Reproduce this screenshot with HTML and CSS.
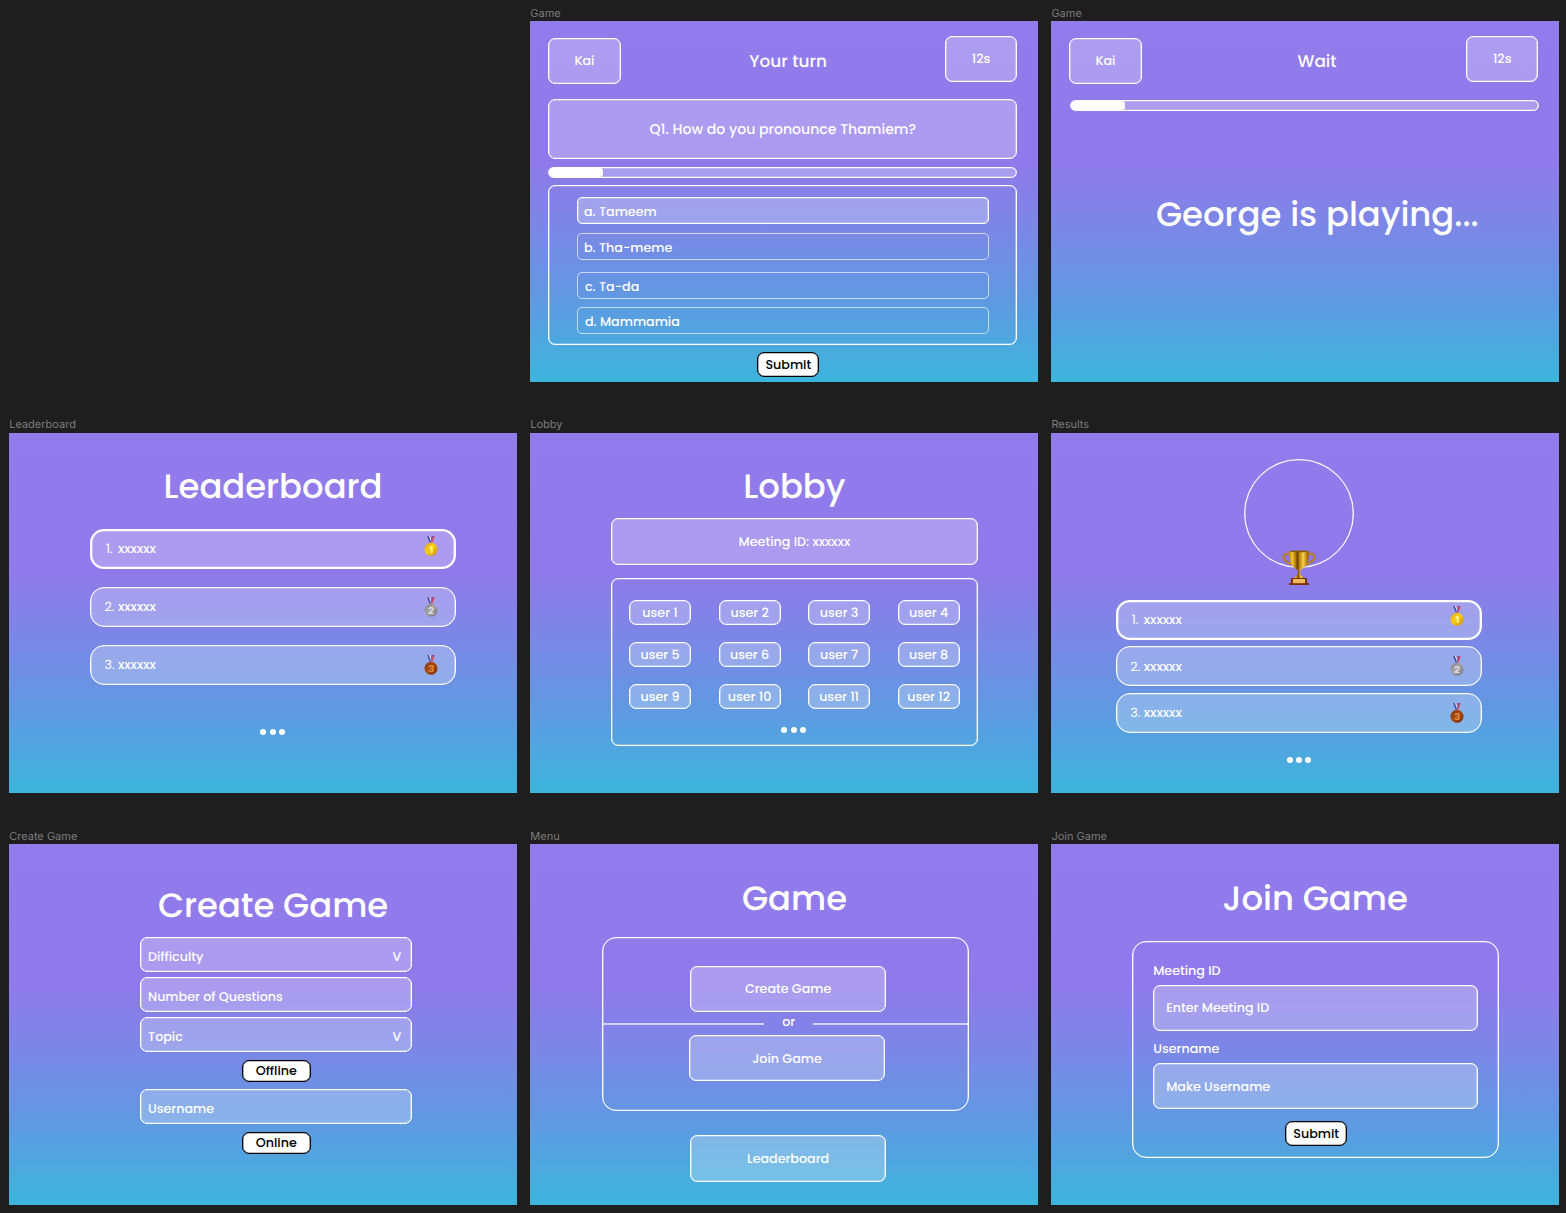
FILE: index.html
```html
<!DOCTYPE html>
<html lang="en">
<head>
<meta charset="utf-8">
<title>Quiz game screens</title>
<link rel="stylesheet" href="styles.css">
</head>
<body>
<svg class="defs" width="0" height="0" aria-hidden="true">
  <defs>
    <linearGradient id="gold" x1="0" y1="0" x2="1" y2="1"><stop offset="0" stop-color="#e0a800"/><stop offset=".45" stop-color="#f9cf0a"/><stop offset="1" stop-color="#c98a06"/></linearGradient>
    <linearGradient id="silver" x1="0" y1="0" x2="1" y2="1"><stop offset="0" stop-color="#858589"/><stop offset=".45" stop-color="#a3a3a6"/><stop offset="1" stop-color="#77777c"/></linearGradient>
    <linearGradient id="bronze" x1="0" y1="0" x2="1" y2="1"><stop offset="0" stop-color="#7d3206"/><stop offset=".45" stop-color="#a94e12"/><stop offset="1" stop-color="#6f2b05"/></linearGradient>
    <linearGradient id="cup" x1="0" x2="1"><stop offset="0" stop-color="#b57a06"/><stop offset=".15" stop-color="#f3c93a"/><stop offset=".3" stop-color="#c48a0a"/><stop offset=".42" stop-color="#6b4304"/><stop offset=".55" stop-color="#c98f10"/><stop offset=".72" stop-color="#f5cf4c"/><stop offset=".88" stop-color="#b97d08"/><stop offset="1" stop-color="#8c5a04"/></linearGradient>
    <symbol id="ribbon" viewBox="0 0 14 20">
      <path d="M3.200 0H5l2.300 6.500H5.500z" fill="#3d4fa8"/>
      <path d="M5 0h1.300l1.200 4-.4 2z" fill="#f2eefc"/>
      <path d="M6.300 0h.9l.5 3-.4 1z" fill="#d8506c"/>
      <path d="M10.800 0H9.200L6.800 6.500h1.800z" fill="#e0455c"/>
      <path d="M9.200 0H8L6.600 5l.2 1z" fill="#3d4fa8"/>
    </symbol>
  </defs>
</svg>
<main class="board">

  <section class="artboard first">
    <h2 class="label">Game</h2>
    <div class="frame game">
      <header class="topbar">
        <div class="box chip kai">Kai</div>
        <div class="turn">Your turn</div>
        <div class="box chip time">12s</div>
      </header>
      <div class="box question">Q1. How do you pronounce Thamiem?</div>
      <div class="box progress"><span class="fill"></span></div>
      <div class="outline options">
        <div class="box option chosen">a. Tameem</div>
        <div class="option">b. Tha-meme</div>
        <div class="option third">c. Ta-da</div>
        <div class="option fourth">d. Mammamia</div>
      </div>
      <button class="solid submit">Submit</button>
    </div>
  </section>

  <section class="artboard">
    <h2 class="label">Game</h2>
    <div class="frame wait">
      <header class="topbar">
        <div class="box chip kai">Kai</div>
        <div class="turn">Wait</div>
        <div class="box chip time">12s</div>
      </header>
      <div class="box progress"><span class="fill"></span></div>
      <h1 class="title playing">George is playing...</h1>
    </div>
  </section>

  <section class="artboard">
    <h2 class="label">Leaderboard</h2>
    <div class="frame leaders">
      <h1 class="title">Leaderboard</h1>
      <ol class="ranks">
        <li class="box rank top"><span><i>1.</i> xxxxxx</span><svg class="medal" viewBox="0 0 14 20"><use href="#ribbon"/><circle cx="7" cy="13.300" r="6.500" fill="url(#gold)"/><text x="7" y="16.700" fill="#fff3b0">1</text></svg></li>
        <li class="box rank"><span><i>2.</i> xxxxxx</span><svg class="medal" viewBox="0 0 14 20"><use href="#ribbon"/><circle cx="7" cy="13.300" r="6.500" fill="url(#silver)"/><text x="7" y="16.700" fill="#dededf">2</text></svg></li>
        <li class="box rank"><span><i>3.</i> xxxxxx</span><svg class="medal" viewBox="0 0 14 20"><use href="#ribbon"/><circle cx="7" cy="13.300" r="6.500" fill="url(#bronze)"/><text x="7" y="16.700" fill="#e58a3c">3</text></svg></li>
      </ol>
      <div class="dots"><b></b><b></b><b></b></div>
    </div>
  </section>

  <section class="artboard">
    <h2 class="label">Lobby</h2>
    <div class="frame lobby">
      <h1 class="title">Lobby</h1>
      <div class="box meeting">Meeting ID: xxxxxx</div>
      <div class="outline players">
        <div class="users">
          <span class="box user">user 1</span><span class="box user">user 2</span><span class="box user">user 3</span><span class="box user">user 4</span>
          <span class="box user">user 5</span><span class="box user">user 6</span><span class="box user">user 7</span><span class="box user">user 8</span>
          <span class="box user">user 9</span><span class="box user">user 10</span><span class="box user">user 11</span><span class="box user">user 12</span>
        </div>
        <div class="dots"><b></b><b></b><b></b></div>
      </div>
    </div>
  </section>

  <section class="artboard">
    <h2 class="label">Results</h2>
    <div class="frame results">
      <div class="winner">
        <svg class="trophy" viewBox="0 0 34 36">
          <path d="M8.500 4.500C4 2.500 1 4.500 1.500 7.500c.6 3.600 4.500 5.500 8.500 6.800M25.500 4.500c4.500-2 7.500 0 7 3-.6 3.600-4.500 5.500-8.500 6.800" fill="none" stroke="#9a6608" stroke-width="2"/>
          <path d="M8.500 4.500C4 2.500 1 4.500 1.500 7.500c.6 3.600 4.500 5.500 8.500 6.800M25.500 4.500c4.500-2 7.500 0 7 3-.6 3.600-4.500 5.500-8.500 6.800" fill="none" stroke="#dba520" stroke-width="1"/>
          <path d="M7 1h20c0 8-1.200 15-7.300 18.300h-5.400C8.200 16 7 9 7 1z" fill="url(#cup)"/>
          <ellipse cx="17" cy="1.300" rx="10" ry=".9" fill="#8a5c08"/>
          <path d="M14.600 19h4.800l-1.300 2.200c.2 3.600 1.500 5.300 4.400 6.800h-11c2.900-1.500 4.200-3.200 4.400-6.800z" fill="url(#cup)"/>
          <path d="M9 28h16v5h2v2H7v-2h2z" fill="#7d3206"/>
          <rect x="11" y="29" width="12" height="4.200" fill="#f0b95a"/>
        </svg>
      </div>
      <ol class="ranks">
        <li class="box rank top"><span><i>1.</i> xxxxxx</span><svg class="medal" viewBox="0 0 14 20"><use href="#ribbon"/><circle cx="7" cy="13.300" r="6.500" fill="url(#gold)"/><text x="7" y="16.700" fill="#fff3b0">1</text></svg></li>
        <li class="box rank"><span><i>2.</i> xxxxxx</span><svg class="medal" viewBox="0 0 14 20"><use href="#ribbon"/><circle cx="7" cy="13.300" r="6.500" fill="url(#silver)"/><text x="7" y="16.700" fill="#dededf">2</text></svg></li>
        <li class="box rank"><span><i>3.</i> xxxxxx</span><svg class="medal" viewBox="0 0 14 20"><use href="#ribbon"/><circle cx="7" cy="13.300" r="6.500" fill="url(#bronze)"/><text x="7" y="16.700" fill="#e58a3c">3</text></svg></li>
      </ol>
      <div class="dots"><b></b><b></b><b></b></div>
    </div>
  </section>

  <section class="artboard">
    <h2 class="label">Create Game</h2>
    <div class="frame create">
      <h1 class="title">Create Game</h1>
      <div class="box field"><span>Difficulty</span><span>V</span></div>
      <div class="box field count"><span>Number of Questions</span></div>
      <div class="box field"><span>Topic</span><span>V</span></div>
      <button class="solid mode">Offline</button>
      <div class="box field"><span>Username</span></div>
      <button class="solid mode">Online</button>
    </div>
  </section>

  <section class="artboard">
    <h2 class="label">Menu</h2>
    <div class="frame menu">
      <h1 class="title">Game</h1>
      <div class="outline choices">
        <div class="box choice">Create Game</div>
        <div class="divider"><hr><span>or</span><hr></div>
        <div class="box choice join-choice">Join Game</div>
      </div>
      <div class="box choice">Leaderboard</div>
    </div>
  </section>

  <section class="artboard">
    <h2 class="label">Join Game</h2>
    <div class="frame join">
      <h1 class="title">Join Game</h1>
      <div class="outline form">
        <label class="caption">Meeting ID</label>
        <div class="box entry">Enter Meeting ID</div>
        <label class="caption">Username</label>
        <div class="box entry">Make Username</div>
        <button class="solid submit">Submit</button>
      </div>
    </div>
  </section>
</main>
</body>
</html>
```
FILE: styles.css
```css
* { box-sizing: border-box; }
body {
  margin: 0;
  background: #1e1e1e;
  color: #fff;
  font: 500 12.69px/16px Poppins, Inter, sans-serif;
  text-rendering: geometricPrecision;
}
.defs { position: absolute; }
.board {
  display: grid;
  grid-template-columns: repeat(3, 507.6px);
  column-gap: 13.5px;
  grid-auto-rows: 381.5px;
  row-gap: 30.2px;
  padding-left: 9.2px;
  width: 1566px;
  height: 1213px;
  overflow: hidden;
}
.first { grid-column: 2; }
.label {
  margin: 0;
  height: 21px;
  padding-top: 5.7px;
  font: 400 11px/15px Inter, sans-serif;
  color: #7c7c7c;
}
.frame {
  height: 360.5px;
  display: flex;
  flex-direction: column;
  align-items: flex-start;
  background: linear-gradient(180deg, #927cec 0%, #9079ea 38%, #7a88e6 58%, #6198e2 76%, #3cb5dc 100%);
}
.title { margin: 0; font-size: 33.84px; font-weight: 500; line-height: 40px; white-space: nowrap; }
.box, .outline {
  border: 1px solid #fff;
  border-radius: 7px;
  box-shadow: inset 0 0 0 .35px #fff;
}
.box { background: rgba(255, 255, 255, .25); background-clip: padding-box; }
.solid {
  padding: 0;
  border: 1px solid #000;
  border-radius: 7px;
  box-shadow: inset 0 0 0 .35px #000;
  background: #fff;
  color: #000;
  font: inherit;
}
.dots { display: flex; gap: 3.4px; }
.dots b { width: 6px; height: 6px; border-radius: 50%; background: #fff; }

/* Game */
.topbar { display: grid; grid-template-columns: 72.4px 1fr 72.4px; width: 487px; padding: 15.3px 0 0 17.9px; align-items: start; }
.chip { height: 46px; display: grid; place-items: center; padding-top: 2.4px; }
.kai { margin-top: 1.5px; padding-top: 3px; }
.turn { font-size: 16.92px; line-height: 24px; margin-top: 12.7px; padding-left: 10.7px; text-align: center; }
.wait .turn { padding-left: 26.5px; }
.question { margin: 15.3px 0 0 17.9px; width: 469.2px; height: 60px; display: grid; place-items: center; font-size: 14.1px; }
.progress { margin: 8px 0 0 17.9px; width: 469.2px; height: 11px; display: flex; overflow: hidden; border-radius: 6px; }
.fill { width: 54px; background: #fff; border-radius: 0 3px 3px 0; }
.options { margin: 6.9px 0 0 17.9px; width: 469.2px; height: 160px; padding: 11px 27.8px; }
.option { height: 27.3px; border: 1px solid rgba(255, 255, 255, .65); border-radius: 5px; padding: 7px 0 0 6px; margin-bottom: 8.7px; }
.chosen { border-color: #fff; }
.third { margin-top: 11.6px; margin-bottom: 7.4px; padding-left: 7px; }
.fourth { padding-left: 7px; }
.submit { width: 62px; height: 25px; flex-shrink: 0; padding-top: 1px; }
.game .submit { margin: 6.9px 0 0 227px; }
.wait .progress { margin: 16.2px 0 0 18.6px; }
.playing { margin: 83.1px 0 0 104.6px; }

/* Ranking lists */
.ranks { list-style: none; margin: 0; padding: 0; display: flex; flex-direction: column; }
.rank { width: 366.6px; height: 40px; border-radius: 14px; display: flex; justify-content: space-between; padding: 0 17.5px 0 13.7px; align-items: center; }
.rank > span { padding-top: 2.4px; }
.rank.top { border-width: 2px; padding: 0 16.5px 0 14.2px; }
.rank i { display: inline-block; width: 10.2px; font-style: normal; font-weight: 400; }
.top i { width: 8.7px; }
.medal { width: 14px; height: 20px; }
.medal text { font: 800 9.5px Inter, sans-serif; text-anchor: middle; }
.top .medal { margin-top: -7px; }
.leaders .title { margin: 33.5px 0 0 154.3px; }
.leaders .ranks { margin: 23.1px 0 0 80.6px; gap: 18px; }
.leaders .dots { margin: 44.2px 0 0 251.3px; }
.winner { margin: 26px 0 0 192.9px; width: 109.7px; height: 109.7px; border: 1px solid #fff; border-radius: 50%; box-shadow: inset 0 0 0 .35px #fff; padding: 90px 0 0 36.8px; }
.trophy { display: block; width: 34px; height: 36px; }
.results .ranks { margin: 31.5px 0 0 64.2px; gap: 6.6px; }
.results .dots { margin: 24px 0 0 235.3px; }

/* Lobby */
.lobby .title { margin: 33.5px 0 0 213px; }
.meeting { margin: 12px 0 0 80.8px; width: 366.8px; height: 46.5px; display: grid; place-items: center; padding-top: 2.6px; }
.players { margin: 13.8px 0 0 80.8px; width: 366.8px; height: 167.5px; padding: 20.5px 0 0 17px; }
.users { display: grid; grid-template-columns: repeat(4, 62px); gap: 17px 27.5px; }
.user { height: 25px; display: grid; place-items: center; padding-top: 2.2px; }
.players .dots { margin: 17.9px 0 0 152.3px; }

/* Create game */
.create .title { margin: 41px 0 6.8px 148.7px; }
.field { margin: 4.9px 0 0 130.8px; width: 272.4px; height: 35.2px; display: flex; justify-content: space-between; padding: 12px 10px 0 7px; }
.field.count { margin: 4.3px 0 .6px 130.8px; }
.mode { margin: 7.5px 0 2.4px 232.6px; width: 69px; height: 22px; padding-top: 1px; }

/* Menu */
.menu .title { margin: 34px 0 0 211.7px; }
.choices { margin: 18.5px 0 24.5px 72px; width: 366.8px; height: 174px; border-radius: 14px; padding-top: 28px; }
.choice { width: 196.8px; height: 46.3px; display: grid; place-items: center; margin-left: 159.4px; padding-top: 2.4px; }
.choices .choice { margin-left: 86.4px; }
.choices .join-choice { margin-left: 85.3px; }
.divider { display: flex; justify-content: space-between; height: 23px; }
.divider span { padding-top: 2.6px; }
.divider hr { margin: 10.5px 0 0; border: 0; height: 2px; width: 161px; background: rgba(255, 255, 255, .65); }
.divider hr:last-child { width: 155px; }

/* Join game */
.join .title { margin: 34px 0 0 171px; }
.form { margin: 22.5px 0 0 80.8px; width: 366.8px; height: 217px; border-radius: 14px; padding: 21.5px 20px 0; display: flex; flex-direction: column; }
.caption { height: 21.3px; flex-shrink: 0; padding-top: .6px; }
.entry { height: 46.3px; flex-shrink: 0; padding: 15.5px 0 0 12px; margin-bottom: 10.9px; }
.form .submit { margin: 1px 0 0 132px; }
```
